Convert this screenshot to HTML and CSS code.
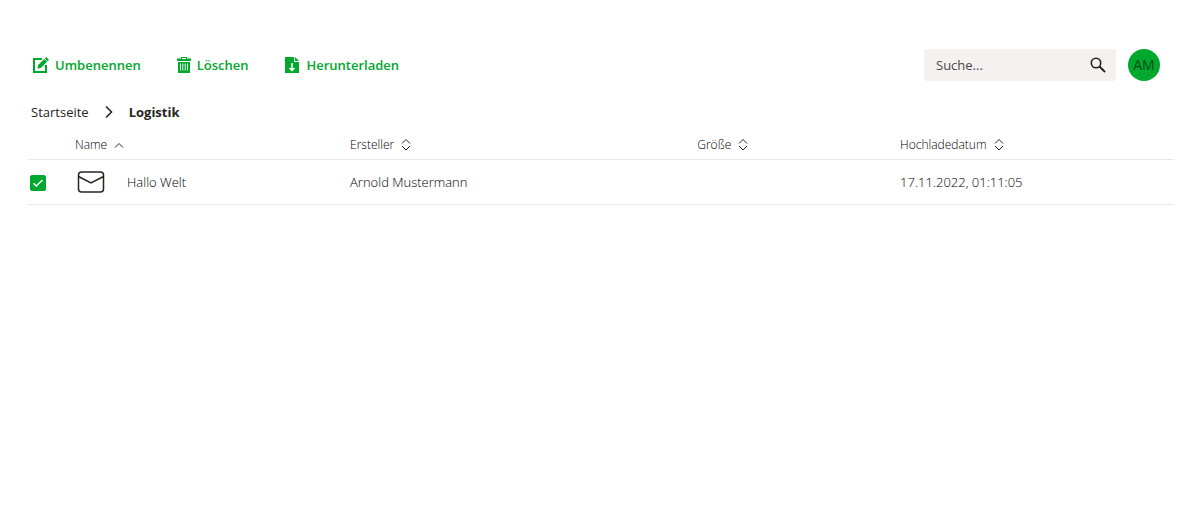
FILE: index.html
```html
<!DOCTYPE html>
<html lang="de">
<head>
    <meta charset="UTF-8">
    <meta name="viewport" content="width=device-width, initial-scale=1.0">
    <title>Logistik</title>
    <link rel="stylesheet" href="styles.css">
</head>
<body>
    <header class="toolbar">
        <div class="actions">
            <button class="action" type="button">
                <svg width="16" height="16" viewBox="0 0 16 16">
                    <path d="M9 2H1v13h12V8" fill="none" stroke="currentColor" stroke-width="2"/>
                    <path d="M4.500 11.500l.6-3.400 6.200-6.200 2.800 2.800-6.200 6.200zM11.800 1.400L13.200 0 16 2.800 14.600 4.200z" fill="currentColor"/>
                </svg>
                Umbenennen
            </button>
            <button class="action" type="button">
                <svg width="14" height="16" viewBox="0 0 14 16">
                    <path d="M4 1.500V0h6v1.500h4V4H0V1.500zM1 5h12v11H1z" fill="currentColor"/>
                    <path d="M5 1.500h4" stroke="#fff"/>
                    <path d="M3.500 6.500v7M5.800 6.500v7M8.200 6.500v7M10.500 6.500v7" stroke="#fff" stroke-width=".9"/>
                </svg>
                Löschen
            </button>
            <button class="action" type="button">
                <svg width="16" height="16" viewBox="0 0 16 16">
                    <path d="M1 0h9v5h5v11H1zM11 0l4 4h-4z" fill="currentColor"/>
                    <path d="M8 6v7M5.500 11L8 13.500l2.500-2.500" fill="none" stroke="#fff" stroke-width="1.500"/>
                </svg>
                Herunterladen
            </button>
        </div>
        <div class="search">
            <input type="text" placeholder="Suche..." aria-label="Suche">
            <svg width="16" height="16" viewBox="0 0 16 16" fill="none" stroke="#252423">
                <circle cx="6" cy="6" r="4.700" stroke-width="1.600"/>
                <path d="M9.500 9.500l5.500 5.500" stroke-width="2"/>
            </svg>
        </div>
        <button class="avatar" type="button">AM</button>
    </header>

    <main>
        <nav class="breadcrumb">
            <a href="#">Startseite</a>
            <svg width="8" height="14" viewBox="0 0 8 14">
                <path d="M1 1.500L6.500 7 1 12.500" fill="none" stroke="#252423" stroke-width="1.600"/>
            </svg>
            <strong>Logistik</strong>
        </nav>

        <table class="files">
            <thead>
                <tr>
                    <th class="col-check"></th>
                    <th class="col-name">
                        <button type="button">Name
                            <svg width="10" height="12" viewBox="0 0 10 12"><path d="M1 8.500l4-4 4 4"/></svg>
                        </button>
                    </th>
                    <th class="col-creator">
                        <button type="button">Ersteller
                            <svg width="10" height="12" viewBox="0 0 10 12"><path d="M1 4.500l4-4 4 4M1 7l4 4 4-4"/></svg>
                        </button>
                    </th>
                    <th class="col-size">
                        <button type="button">Größe
                            <svg width="10" height="12" viewBox="0 0 10 12"><path d="M1 4.500l4-4 4 4M1 7l4 4 4-4"/></svg>
                        </button>
                    </th>
                    <th>
                        <button type="button">Hochladedatum
                            <svg width="10" height="12" viewBox="0 0 10 12"><path d="M1 4.500l4-4 4 4M1 7l4 4 4-4"/></svg>
                        </button>
                    </th>
                </tr>
            </thead>
            <tbody>
                <tr>
                    <td>
                        <label class="check">
                            <input type="checkbox" aria-label="Hallo Welt auswählen" checked>
                            <svg width="16" height="16" viewBox="0 0 16 16"><path d="M3.500 8.200l2.800 2.800 6.200-6"/></svg>
                        </label>
                    </td>
                    <td>
                        <div class="file">
                            <svg width="28" height="22" viewBox="0 0 28 22" fill="none" stroke="#252423" stroke-width="1.500">
                                <rect x="1.500" y="1" width="25" height="20" rx="3"/>
                                <path d="M1.500 5.500L14 12l12.500-6.500"/>
                            </svg>
                            <span>Hallo Welt</span>
                        </div>
                    </td>
                    <td>Arnold Mustermann</td>
                    <td></td>
                    <td>17.11.2022, 01:11:05</td>
                </tr>
            </tbody>
        </table>
    </main>
</body>
</html>
```
FILE: styles.css
```css
* {
    box-sizing: border-box;
}

body {
    margin: 0;
    padding: 49px 24px 0 28px;
    background-color: #fff;
    color: #252423;
    font-family: "Segoe UI", "Open Sans", sans-serif;
    font-size: 13px;
    line-height: 20px;
}

button {
    padding: 0;
    border: none;
    background: none;
    color: inherit;
    font: inherit;
    cursor: pointer;
}

.toolbar {
    display: flex;
    align-items: center;
    gap: 12px;
    padding-right: 14px;
}

.actions {
    display: flex;
    flex: 1;
    gap: 36px;
    padding-left: 5px;
}

.action {
    display: flex;
    align-items: center;
    gap: 6px;
    color: #00a82d;
    font-weight: 600;
}

.search {
    display: flex;
    align-items: center;
    width: 192px;
    height: 32px;
    padding: 0 10px 0 12px;
    border-radius: 3px;
    background-color: #f3f2f1;
}

.search input {
    flex: 1;
    min-width: 0;
    padding: 0;
    border: none;
    outline: none;
    background: none;
    color: inherit;
    font: inherit;
}

.search input::placeholder {
    color: #484644;
    opacity: 1;
}

.avatar {
    width: 32px;
    height: 32px;
    border-radius: 50%;
    background-color: #00a82d;
    color: #0b4a1b;
    font-size: 14px;
}

.breadcrumb {
    display: flex;
    align-items: center;
    gap: 16px;
    margin-top: 21px;
    padding-left: 3px;
}

.breadcrumb a {
    color: inherit;
    text-decoration: none;
}

.files {
    width: 100%;
    margin-top: 8px;
    border-collapse: collapse;
    table-layout: fixed;
    color: #000;
    font-weight: 300;
}

.files th,
.files td {
    padding: 0;
    border-bottom: 1px solid #e8e8e8;
    text-align: left;
}

.files th {
    height: 29px;
    padding-top: 2px;
    font-size: 12px;
    font-weight: 300;
}

.files td {
    height: 45px;
}

.files th button {
    display: flex;
    align-items: center;
    gap: 7px;
}

.files th svg {
    fill: none;
    stroke: #252423;
}

.col-check {
    width: 47px;
}

.col-name {
    width: 24%;
}

.col-creator {
    width: 30.300%;
}

.col-size {
    width: 17.700%;
}

.check {
    display: grid;
    width: 16px;
    margin: 2px 0 0 2px;
}

.check input,
.check svg {
    grid-area: 1 / 1;
}

.check input {
    width: 16px;
    height: 16px;
    margin: 0;
    border: 1px solid #00a82d;
    border-radius: 2px;
    appearance: none;
}

.check input:checked {
    background-color: #00a82d;
}

.check svg {
    fill: none;
    stroke: #fff;
    stroke-width: 1.500;
    pointer-events: none;
}

.file {
    display: flex;
    align-items: center;
    gap: 22px;
    padding-left: 2px;
}
```
